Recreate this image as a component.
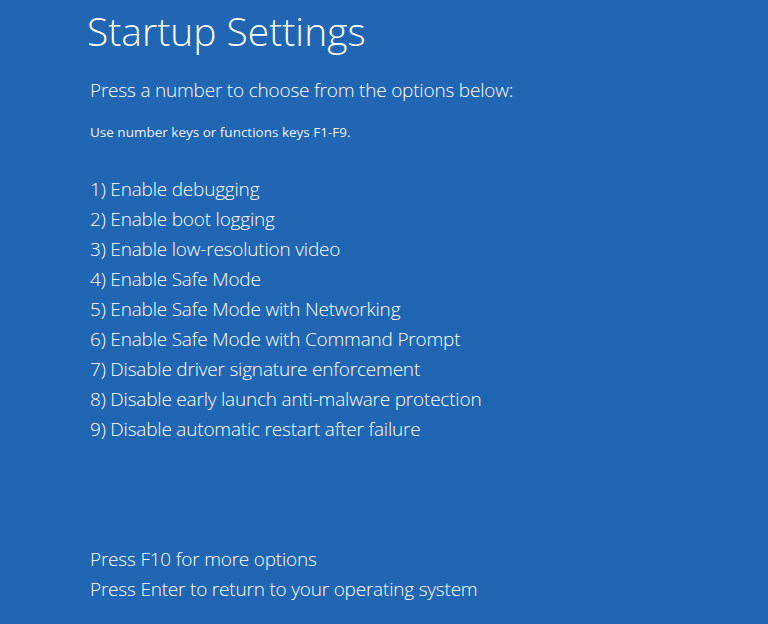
const OPTIONS = [
  "1) Enable debugging",
  "2) Enable boot logging",
  "3) Enable low-resolution video",
  "4) Enable Safe Mode",
  "5) Enable Safe Mode with Networking",
  "6) Enable Safe Mode with Command Prompt",
  "7) Disable driver signature enforcement",
  "8) Disable early launch anti-malware protection",
  "9) Disable automatic restart after failure",
];

export default function App() {
  return (
    <div className="h-[624px] w-[768px] overflow-hidden bg-[#2066b2] text-white font-['Open_Sans',sans-serif]">
      <div className="pl-[90px] pt-[7px]">
        <h1 className="-ml-[3px] text-[39px] font-light leading-[48px]">Startup Settings</h1>

        <p className="mt-[20px] text-[19px] font-light leading-[30px] tracking-[-0.2px]">
          Press a number to choose from the options below:
        </p>
        <p className="mt-[17px] text-[13.5px] leading-[20px] text-white/95">
          Use number keys or functions keys F1-F9.
        </p>

        <ul className="mt-[32px]">
          {OPTIONS.map((opt) => (
            <li key={opt} className="text-[19px] font-light leading-[30px] tracking-[-0.2px]">
              {opt}
            </li>
          ))}
        </ul>

        <div className="mt-[100px] text-[19px] font-light leading-[30px] tracking-[-0.2px]">
          <p>Press F10 for more options</p>
          <p>Press Enter to return to your operating system</p>
        </div>
      </div>
    </div>
  );
}
